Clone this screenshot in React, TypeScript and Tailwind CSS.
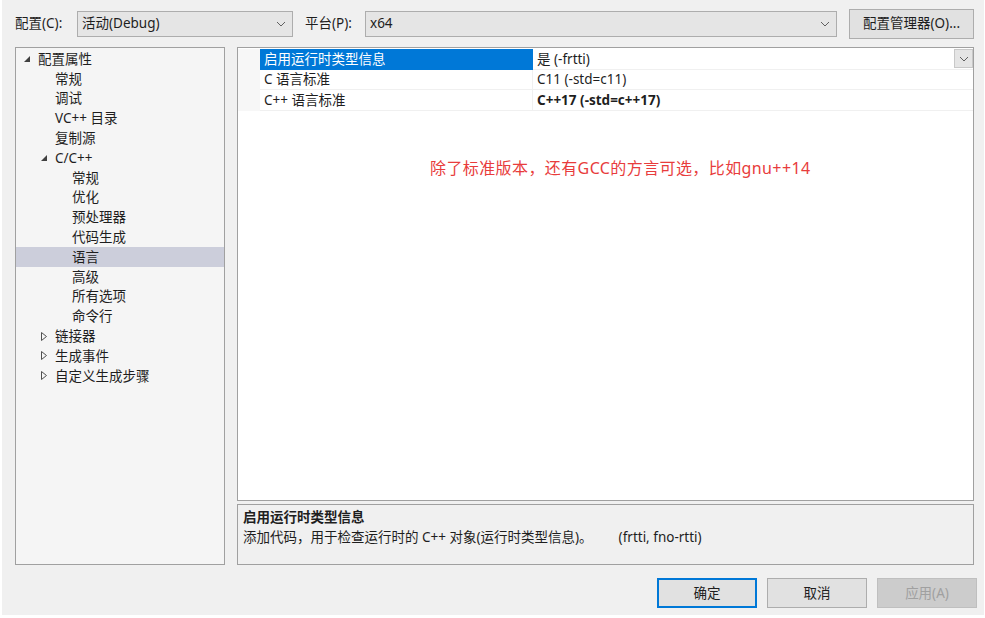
import React from "react";

const font = { fontFamily: '"Segoe UI", "Noto Sans", "Noto Sans CJK SC", sans-serif' };

type TreeItem = { label: string; level: number; arrow?: "open" | "closed"; selected?: boolean };

const tree: TreeItem[] = [
  { label: "配置属性", level: 0, arrow: "open" },
  { label: "常规", level: 1 },
  { label: "调试", level: 1 },
  { label: "VC++ 目录", level: 1 },
  { label: "复制源", level: 1 },
  { label: "C/C++", level: 1, arrow: "open" },
  { label: "常规", level: 2 },
  { label: "优化", level: 2 },
  { label: "预处理器", level: 2 },
  { label: "代码生成", level: 2 },
  { label: "语言", level: 2, selected: true },
  { label: "高级", level: 2 },
  { label: "所有选项", level: 2 },
  { label: "命令行", level: 2 },
  { label: "链接器", level: 1, arrow: "closed" },
  { label: "生成事件", level: 1, arrow: "closed" },
  { label: "自定义生成步骤", level: 1, arrow: "closed" },
];

const Chevron = () => (
  <svg width="10" height="6" viewBox="0 0 10 6" className="shrink-0">
    <path d="M1 1 L5 5 L9 1" fill="none" stroke="#606060" strokeWidth="1" />
  </svg>
);

const Arrow = ({ kind }: { kind: "open" | "closed" }) =>
  kind === "open" ? (
    <svg width="8" height="8" viewBox="0 0 8 8">
      <path d="M7 1 L7 7 L1 7 Z" fill="#404040" />
    </svg>
  ) : (
    <svg width="8" height="9" viewBox="0 0 8 9">
      <path d="M1.5 0.5 L6.5 4.5 L1.5 8.5 Z" fill="none" stroke="#505050" strokeWidth="1" />
    </svg>
  );

const Select: React.FC<{ value: string; className: string }> = ({ value, className }) => (
  <div
    className={`h-[26px] bg-[#e5e5e5] border border-[#adadad] flex items-center justify-between pl-[4px] pr-[6px] ${className}`}
  >
    <span>{value}</span>
    <Chevron />
  </div>
);

const App: React.FC = () => {
  return (
    <div style={font} className="w-[985px] h-[618px] bg-white text-[13.5px] text-[#1e1e1e]">
      <div className="w-[982px] h-[615px] ml-[2px] bg-[#f0f0f0] flex flex-col">
        {/* top bar */}
        <div className="flex items-center h-[47px]">
          <span className="ml-[13px] w-[62px]">配置(C):</span>
          <Select value="活动(Debug)" className="w-[216px]" />
          <span className="ml-[12px] w-[60px]">平台(P):</span>
          <Select value="x64" className="w-[472px]" />
          <button className="ml-[12px] w-[125px] h-[30px] bg-[#e1e1e1] border border-[#adadad]">
            配置管理器(O)...
          </button>
        </div>

        {/* main area */}
        <div className="flex h-[518px]">
          {/* tree */}
          <div className="ml-[13px] w-[210px] h-[518px] bg-[#f5f5f5] border border-[#a0a0a0] pt-[1px]">
            {tree.map((t, i) => (
              <div
                key={i}
                className={`h-[19.8px] flex items-center ${t.selected ? "bg-[#cccedb]" : ""}`}
                style={{ paddingLeft: 6 + t.level * 17 }}
              >
                <span className="w-[16px] flex items-center justify-start pl-[1px]">
                  {t.arrow && <Arrow kind={t.arrow} />}
                </span>
                <span>{t.label}</span>
              </div>
            ))}
          </div>

          {/* right */}
          <div className="ml-[12px] w-[737px] flex flex-col">
            <div className="h-[454px] bg-white border border-[#a0a0a0] flex flex-col pt-[1px]">
              <div className="flex flex-col">
                <div className="flex h-[20.5px]">
                  <div className="w-[22px] bg-[#f7f7f7]" />
                  <div className="w-[273px] bg-[#0078d7] text-white pl-[4px] flex items-center">启用运行时类型信息</div>
                  <div className="flex-1 flex items-center justify-between pl-[4px] border-b border-[#f0f0f0]">
                    <span>是 (-frtti)</span>
                    <div className="w-[19px] h-[19px] bg-[#e5e5e5] border border-[#c8c8c8] flex items-center justify-center">
                      <Chevron />
                    </div>
                  </div>
                </div>
                <div className="flex h-[20.5px]">
                  <div className="w-[22px] bg-[#f7f7f7]" />
                  <div className="w-[273px] pl-[4px] flex items-center border-b border-r border-[#f0f0f0]">C 语言标准</div>
                  <div className="flex-1 flex items-center pl-[4px] border-b border-[#f0f0f0]">C11 (-std=c11)</div>
                </div>
                <div className="flex h-[20.5px]">
                  <div className="w-[22px] bg-[#f7f7f7]" />
                  <div className="w-[273px] pl-[4px] flex items-center border-b border-r border-[#f0f0f0]">C++ 语言标准</div>
                  <div className="flex-1 flex items-center pl-[4px] border-b border-[#f0f0f0] font-bold">C++17 (-std=c++17)</div>
                </div>
              </div>
              <div className="mt-[45px] ml-[192px] text-[16px] tracking-[0.4px] text-[#e83c3c]">
                除了标准版本，还有GCC的方言可选，比如gnu++14
              </div>
            </div>
            <div className="mt-[3px] h-[61px] bg-[#f0f0f0] border border-[#a0a0a0] pl-[5px] pt-[2px]">
              <div className="font-bold leading-[20px]">启用运行时类型信息</div>
              <div className="leading-[20px]">
                添加代码，用于检查运行时的 C++ 对象(运行时类型信息)。<span className="ml-[26px]">(frtti, fno-rtti)</span>
              </div>
            </div>
          </div>
        </div>

        {/* buttons */}
        <div className="flex justify-end gap-[10px] mt-[13px] pr-[7px]">
          <button className="w-[100px] h-[30px] bg-[#e1e1e1] border-2 border-[#0078d7]">确定</button>
          <button className="w-[100px] h-[30px] bg-[#e1e1e1] border border-[#adadad]">取消</button>
          <button className="w-[100px] h-[30px] bg-[#cccccc] border border-[#bfbfbf] text-[#a0a0a0]">应用(A)</button>
        </div>
      </div>
    </div>
  );
};

export default App;
